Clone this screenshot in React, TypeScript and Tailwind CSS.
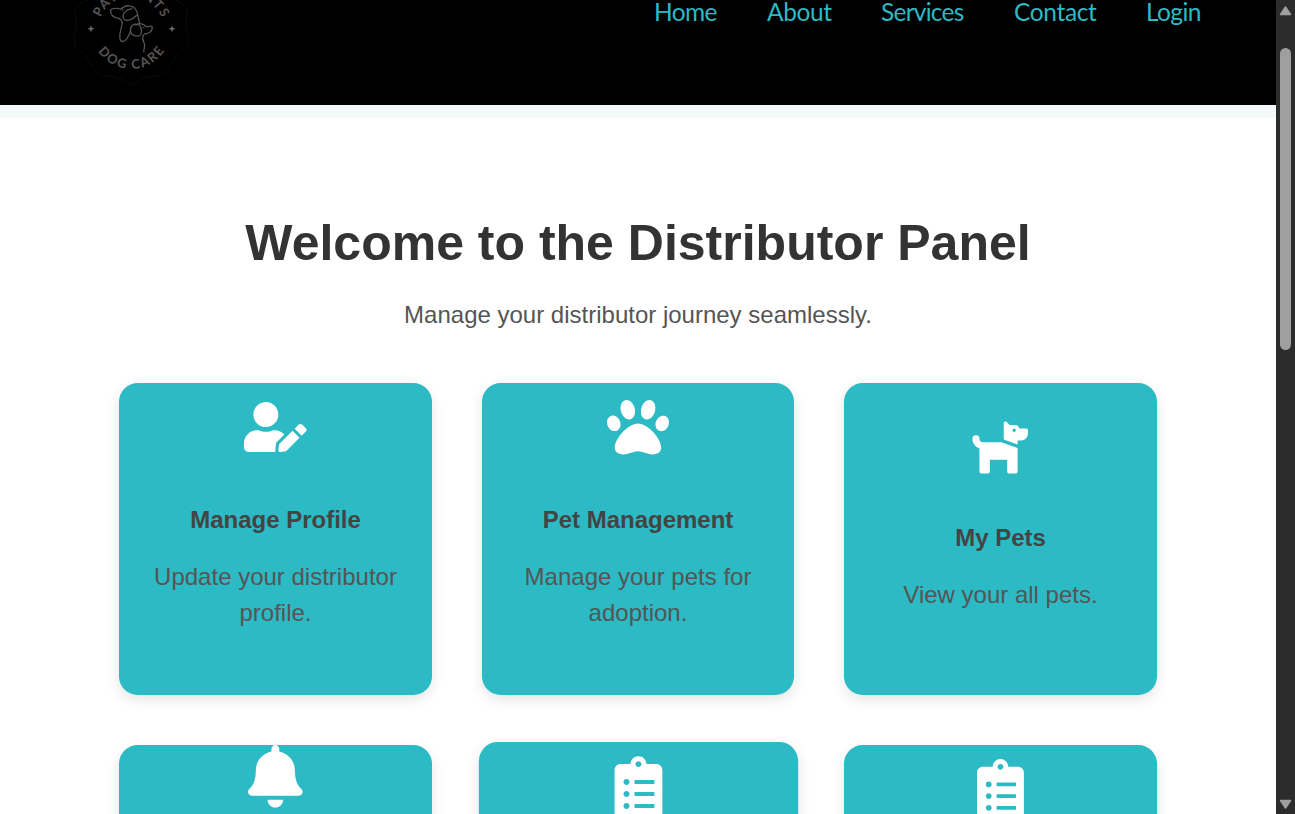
import { FaBell, FaClipboardList, FaDog, FaPaw, FaUserEdit } from "react-icons/fa";
import type { IconType } from "react-icons";

type Card = { title: string; text: string; Icon: IconType; iconClass: string; cardClass: string };

const cards: Card[] = [
  { title: "Manage Profile", text: "Update your distributor profile.", Icon: FaUserEdit, iconClass: "mt-[19.5px] h-[50px] w-[62.5px] mb-[50px]", cardClass: "" },
  { title: "Pet Management", text: "Manage your pets for adoption.", Icon: FaPaw, iconClass: "mt-[13px] h-[62.5px] w-[62px] mb-[44px]", cardClass: "" },
  { title: "My Pets", text: "View your all pets.", Icon: FaDog, iconClass: "mt-[35px] h-[55.5px] w-[62.5px] mb-[47px]", cardClass: "" },
  { title: "Notifications", text: "View your latest notifications.", Icon: FaBell, iconClass: "-mt-[0.5px] -ml-px h-[62.5px] w-[54.7px] mb-[44px]", cardClass: "" },
  { title: "Adoption Requests", text: "Review adoption requests.", Icon: FaClipboardList, iconClass: "mt-[13.75px] h-[62.5px] w-[46.9px] mb-[44.25px]", cardClass: "scale-[1.02]" },
  { title: "My Orders", text: "View your orders.", Icon: FaClipboardList, iconClass: "mt-[13.5px] -ml-px h-[62.5px] w-[46.9px] mb-[44.5px]", cardClass: "" },
];

const links = [
  { label: "Home", cls: "w-[63px] mr-[50px] tracking-[-0.6px]" },
  { label: "About", cls: "w-[64px] mr-[50px] tracking-[-0.4px]" },
  { label: "Services", cls: "w-[83px] mr-[50px] tracking-[-0.75px]" },
  { label: "Contact", cls: "w-[82px] mr-[50px] tracking-[-0.35px]" },
  { label: "Login", cls: "w-[55px] tracking-[-0.6px]" },
];

function Logo() {
  return (
    <svg className="-mt-[31px] h-[120px] w-[120px] shrink-0" viewBox="71 -31 120 120" fill="none">
      <path
        d="M131 -27Q138-20 148-19Q160-20 164-10Q168-2 180 2Q190 10 186 18Q184 25 187 32Q191 44 183 50Q175 56 172 63Q167 75 155 76Q141 77 131 85Q121 77 107 76Q95 75 90 63Q87 56 79 50Q71 44 75 32Q78 25 76 18Q72 10 82 2Q94-2 98-10Q102-20 114-19Q124-20 131-27Z"
        stroke="#0b0b0b"
      />
      <path id="upper-arc" d="M98 30A33 33 0 0 1 164 30" />
      <path id="lower-arc" d="M91.5 29.5A39.5 39.5 0 0 0 170.5 29.5" />
      <g fill="#565656" fontFamily="Lato, sans-serif" fontSize="13" fontWeight="700" textAnchor="middle">
        <text letterSpacing="1.1"><textPath href="#upper-arc" startOffset="50.5%">PAWRENTS</textPath></text>
        <text letterSpacing="1.7"><textPath href="#lower-arc" startOffset="51%">DOG CARE</textPath></text>
      </g>
      <path d="M91 25.2L92 27.8L94.5 28.8L92 29.8L91 32.4L90 29.8L87.5 28.8L90 27.8ZM172 25.2L173 27.8L175.5 28.8L173 29.8L172 32.4L171 29.8L168.5 28.8L171 27.8Z" fill="#666" />
      <g stroke="#545454" strokeWidth="1.3" strokeLinecap="round" strokeLinejoin="round">
        <path d="M136.500 15.500C132 20 126 22.500 123.500 18.500C121.500 14 127 8.500 132 8.800M121 9.200C126 4 133 5 136 10C139 15 137.500 19 140 24M121 9.200C116.500 7.500 112 8.500 110.500 10C110.500 14 113 17 117 17.800C121 18.500 122.500 20 122 24C121.500 29 117.500 37 121 41C125 43.500 129 36 130.500 31" />
        <path d="M130.500 31C130 26 134 23 138 24.500C142 26.500 142.500 33 140 35.500C136 37 130.500 35 130.500 31ZM136 25C139 22.500 144 24 146 26.500C149 27 151 25.500 152 26.500C153 31 149.500 33.500 144.500 34C140.500 37 143.500 41 144.500 44C145.300 47 143.500 49 143.800 52" />
      </g>
      <circle cx="122.800" cy="10.300" r="0.7" fill="#5b5b5b" />
      <circle cx="143" cy="27.500" r="0.7" fill="#5b5b5b" />
    </svg>
  );
}

function ScrollBar() {
  return (
    <div className="flex w-[19px] shrink-0 flex-col items-center bg-[#2c2c2c]">
      <svg className="mt-[6px] h-[10px] w-[13px]" viewBox="0 0 13 10"><path d="M6.500 1L11.500 8.500H1.500Z" fill="#9f9f9f" stroke="#9f9f9f" strokeLinejoin="round" strokeWidth="1.500" /></svg>
      <div className="mt-[32px] h-[302px] w-[11px] rounded-full bg-[#9f9f9f]" />
      <svg className="mt-auto mb-[5px] h-[10px] w-[13px]" viewBox="0 0 13 10"><path d="M6.500 9L11.500 1.500H1.500Z" fill="#9f9f9f" stroke="#9f9f9f" strokeLinejoin="round" strokeWidth="1.500" /></svg>
    </div>
  );
}

export default function App() {
  return (
    <div className="flex h-[814px] w-[1295px] overflow-hidden bg-white font-['Liberation_Sans',Arial,sans-serif]">
      <div className="flex min-w-0 flex-1 flex-col overflow-hidden">
        <header className="flex h-[105px] shrink-0 items-start justify-between bg-black pr-[75px] pl-[71px]">
          <Logo />
          <nav className="-mt-[3px] flex font-[Lato,sans-serif] text-[24.5px] leading-[30px] whitespace-nowrap text-[#2cbac4]">
            {links.map((l) => <a key={l.label} href="#" className={l.cls}>{l.label}</a>)}
          </nav>
        </header>
        <div className="h-[13px] shrink-0 bg-[#f4f9f9]" />
        <main className="flex shrink-0 flex-col items-center pt-[95px]">
          <h1 className="h-[60px] text-[50px] leading-[60px] font-bold whitespace-nowrap text-[#333]">Welcome to the Distributor Panel</h1>
          <p className="mt-[24px] h-[36px] text-[24px] leading-[36px] whitespace-nowrap text-[#555]">Manage your distributor journey seamlessly.</p>
          <div className="mt-[49.500px] grid grid-cols-[312.5px_312.5px_312.5px] gap-[50px]">
            {cards.map(({ title, text, Icon, iconClass, cardClass }) => (
              <section key={title} className={"flex h-[312.5px] flex-col items-center rounded-[18.75px] bg-[#2cbac4] px-[25px] text-center shadow-[0_5px_12.5px_rgba(0,0,0,0.1)] " + cardClass}>
                <Icon className={"shrink-0 overflow-visible text-white " + iconClass} />
                <h2 className="text-[24px] leading-[36px] font-bold text-[#444]">{title}</h2>
                <p className="mt-[21px] text-[24px] leading-[36px] text-[#555]">{text}</p>
              </section>
            ))}
          </div>
        </main>
      </div>
      <ScrollBar />
    </div>
  );
}
